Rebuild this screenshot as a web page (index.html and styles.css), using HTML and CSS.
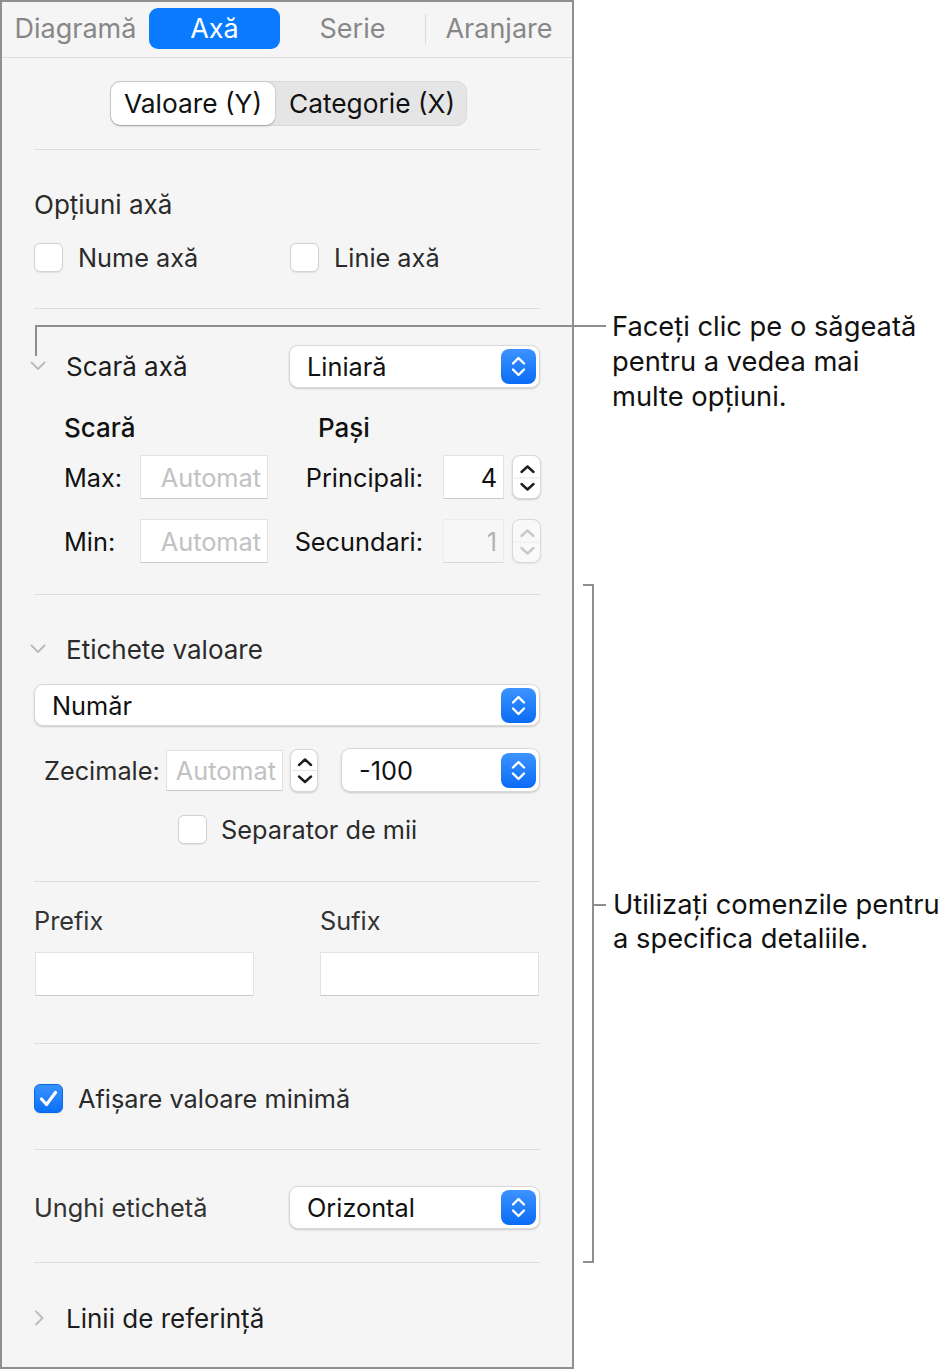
FILE: index.html
```html
<!DOCTYPE html>
<html lang="ro">
<head>
<meta charset="utf-8">
<title>Axă</title>
<link rel="stylesheet" href="styles.css">
</head>
<body>
<div class="page">
  <div class="panel">
    <div class="tabbar">
      <div class="tab t1">Diagramă</div>
      <div class="tab pill">Axă</div>
      <div class="tab t3">Serie</div>
      <div class="tabsep"></div>
      <div class="tab t4">Aranjare</div>
    </div>

    <div class="segwrap">
      <div class="seg">
        <div class="segitem on">Valoare (Y)</div>
        <div class="segitem">Categorie (X)</div>
      </div>
    </div>

    <div class="divider"></div>

    <div class="sec sec-a">
      <div class="title h40">Opțiuni axă</div>
      <div class="checks">
        <div class="chk w256"><span class="box"></span><span class="lbl">Nume axă</span></div>
        <div class="chk"><span class="box"></span><span class="lbl">Linie axă</span></div>
      </div>
    </div>

    <div class="divider"></div>

    <div class="sec sec-b">
      <div class="disc h44">
        <span class="chev"><svg width="16" height="10" viewBox="0 0 16 10"><path d="M1.5 1.5 L8 8 L14.5 1.5" stroke="#bcbcbc" stroke-width="2" fill="none" stroke-linecap="round" stroke-linejoin="round"/></svg></span>
        <span class="disc-t">Scară axă</span>
        <div class="popup w251">
          <span class="pv">Liniară</span>
          <span class="pbtn"><svg width="35" height="35" viewBox="0 0 35 35"><path d="M12 14.5 L17.5 9 L23 14.5 M12 20.5 L17.5 26 L23 20.5" stroke="#fff" stroke-width="2.4" fill="none" stroke-linecap="round" stroke-linejoin="round"/></svg></span>
        </div>
      </div>
      <div class="subhead">
        <span class="sh1">Scară</span>
        <span class="sh2">Pași</span>
      </div>
      <div class="numrow r-max">
        <span class="nl">Max:</span>
        <span class="field f128 ph">Automat</span>
        <span class="nl2">Principali:</span>
        <span class="field f61">4</span>
        <span class="stepper">
          <svg width="29" height="44" viewBox="0 0 29 44"><path d="M8.5 16 L14.5 10.5 L20.5 16 M8.5 28 L14.5 33.5 L20.5 28" stroke="#1e1e1e" stroke-width="2.4" fill="none" stroke-linecap="round" stroke-linejoin="round"/><path d="M1 22 H28" stroke="#e6e6e6" stroke-width="1"/></svg>
        </span>
      </div>
      <div class="numrow r-min">
        <span class="nl">Min:</span>
        <span class="field f128 ph">Automat</span>
        <span class="nl2">Secundari:</span>
        <span class="field f61 dis">1</span>
        <span class="stepper sdis">
          <svg width="29" height="44" viewBox="0 0 29 44"><path d="M8.5 16 L14.5 10.5 L20.5 16 M8.5 28 L14.5 33.5 L20.5 28" stroke="#c9c9c9" stroke-width="2.4" fill="none" stroke-linecap="round" stroke-linejoin="round"/><path d="M1 22 H28" stroke="#ececec" stroke-width="1"/></svg>
        </span>
      </div>
    </div>

    <div class="divider"></div>

    <div class="sec sec-c">
      <div class="disc h40">
        <span class="chev"><svg width="16" height="10" viewBox="0 0 16 10"><path d="M1.5 1.5 L8 8 L14.5 1.5" stroke="#bcbcbc" stroke-width="2" fill="none" stroke-linecap="round" stroke-linejoin="round"/></svg></span>
        <span class="disc-t dim">Etichete valoare</span>
      </div>
      <div class="popup wfull">
        <span class="pv">Număr</span>
        <span class="pbtn"><svg width="35" height="35" viewBox="0 0 35 35"><path d="M12 14.5 L17.5 9 L23 14.5 M12 20.5 L17.5 26 L23 20.5" stroke="#fff" stroke-width="2.4" fill="none" stroke-linecap="round" stroke-linejoin="round"/></svg></span>
      </div>
      <div class="decrow">
        <span class="dl">Zecimale:</span>
        <span class="field f117 ph">Automat</span>
        <span class="stepper st28">
          <svg width="28" height="43" viewBox="0 0 28 43"><path d="M8 16 L14 10.5 L20 16 M8 27.5 L14 33 L20 27.5" stroke="#1e1e1e" stroke-width="2.4" fill="none" stroke-linecap="round" stroke-linejoin="round"/><path d="M1 21.5 H27" stroke="#e6e6e6" stroke-width="1"/></svg>
        </span>
        <div class="popup w199">
          <span class="pv">-100</span>
          <span class="pbtn"><svg width="35" height="35" viewBox="0 0 35 35"><path d="M12 14.5 L17.5 9 L23 14.5 M12 20.5 L17.5 26 L23 20.5" stroke="#fff" stroke-width="2.4" fill="none" stroke-linecap="round" stroke-linejoin="round"/></svg></span>
        </div>
      </div>
      <div class="seprow">
        <span class="box"></span><span class="lbl">Separator de mii</span>
      </div>
    </div>

    <div class="divider"></div>

    <div class="sec sec-d">
      <div class="pfxlabels">
        <span class="pl">Prefix</span>
        <span>Sufix</span>
      </div>
      <div class="pfxfields">
        <span class="field f219 pf1"></span>
        <span class="field f219 pf2"></span>
      </div>
    </div>

    <div class="divider"></div>

    <div class="sec sec-e">
      <div class="chk">
        <span class="box checked"><svg width="29" height="29" viewBox="0 0 29 29"><path d="M7.5 15 L12.5 20.5 L21.5 8.5" stroke="#fff" stroke-width="3.2" fill="none" stroke-linecap="round" stroke-linejoin="round"/></svg></span>
        <span class="lbl">Afișare valoare minimă</span>
      </div>
    </div>

    <div class="divider"></div>

    <div class="sec sec-f">
      <div class="angrow">
        <span class="lbl">Unghi etichetă</span>
        <div class="popup w251">
          <span class="pv">Orizontal</span>
          <span class="pbtn"><svg width="35" height="35" viewBox="0 0 35 35"><path d="M12 14.5 L17.5 9 L23 14.5 M12 20.5 L17.5 26 L23 20.5" stroke="#fff" stroke-width="2.4" fill="none" stroke-linecap="round" stroke-linejoin="round"/></svg></span>
        </div>
      </div>
    </div>

    <div class="divider"></div>

    <div class="sec sec-g">
      <div class="disc h30">
        <span class="chev"><svg width="10" height="16" viewBox="0 0 10 16"><path d="M2 1.5 L8.5 8 L2 14.5" stroke="#bcbcbc" stroke-width="2" fill="none" stroke-linecap="round" stroke-linejoin="round"/></svg></span>
        <span class="disc-t">Linii de referință</span>
      </div>
    </div>
  </div>

  <div class="ln ln-h1"></div>
  <div class="ln ln-v1"></div>
  <div class="note note1">Faceți clic pe o săgeată<br>pentru a vedea mai<br>multe opțiuni.</div>

  <div class="ln br-v"></div>
  <div class="ln br-top"></div>
  <div class="ln br-bot"></div>
  <div class="ln br-mid"></div>
  <div class="note note2">Utilizați comenzile pentru<br>a specifica detaliile.</div>
</div>
</body>
</html>
```

FILE: styles.css
```css
* { box-sizing: border-box; }
body {
  margin: 0;
  background: #ffffff;
  font-family: Inter, "Liberation Sans", Arial, sans-serif;
  font-size: 25.3px;
  color: #1c1c1c;
}
.page {
  position: relative;
  width: 950px;
  height: 1370px;
}
.panel {
  width: 574px;
  height: 1369px;
  border: 2px solid #8f8f8f;
  background: #f5f5f5;
}

/* tab bar */
.tabbar {
  display: flex;
  align-items: flex-start;
  height: 56px;
  border-bottom: 1px solid #dcdcdc;
  padding-top: 6px;
}
.tab {
  height: 41px;
  display: flex;
  align-items: center;
  justify-content: center;
  color: #878787;
  font-size: 27px;
}
.t1 { width: 147px; }
.pill {
  width: 131px;
  background: #0a7bff;
  color: #ffffff;
  border-radius: 9px;
}
.t3 { width: 145px; }
.tabsep {
  width: 1px;
  height: 30px;
  margin-top: 6px;
  background: #dadada;
}
.t4 { width: 146px; }

/* segmented control */
.segwrap {
  padding-top: 23px;
  padding-left: 108px;
  height: 91px;
}
.seg {
  display: flex;
  width: 357px;
  height: 45px;
  background: #e5e5e5;
  border: 1px solid #dadada;
  border-radius: 10px;
  font-size: 26.3px;
}
.segitem {
  display: flex;
  align-items: center;
  justify-content: center;
  color: #111;
  width: 190px;
  padding-left: 4px;
}
.segitem.on {
  width: 164px;
  background: #ffffff;
  border-radius: 9px;
  box-shadow: 0 0.5px 2px rgba(0,0,0,0.3);
  padding-left: 0;
}

.divider {
  height: 1px;
  background: #dcdcdc;
  margin: 0 32px;
}

.sec { padding: 0 32px; }
.h40 { height: 40px; }
.h44 { height: 44px; }
.h30 { height: 30px; }
.title {
  display: flex;
  align-items: center;
  color: #2b2b2b;
  font-size: 26px;
}

/* checkboxes */
.box {
  display: inline-block;
  width: 29px;
  height: 29px;
  border-radius: 6px;
  background: #ffffff;
  border: 1px solid #d2d2d2;
  box-shadow: 0 0.5px 1px rgba(0,0,0,0.08);
  flex: none;
}
.box.checked {
  background: linear-gradient(#3a92ff, #0b6ff5);
  border-color: #0a6ae6;
}
.box.checked svg { display: block; margin: -1px; }
.chk {
  display: flex;
  align-items: center;
  height: 30px;
}
.chk .lbl { margin-left: 15px; color: #2b2b2b; }
.w256 { width: 256px; }

.sec-a { padding-top: 34px; height: 158px; }
.checks {
  display: flex;
  align-items: center;
  height: 40px;
  margin-top: 13px;
}

/* disclosure rows */
.disc {
  display: flex;
  align-items: center;
  margin-left: -12px;
}
.chev {
  width: 32px;
  display: flex;
  justify-content: center;
  align-items: center;
}
.h30 .chev { padding-left: 2px; }
.disc-t { margin-left: 12px; color: #1c1c1c; font-size: 26px; }
.disc-t.dim { color: #2b2b2b; }

/* popups */
.popup {
  display: flex;
  align-items: center;
  justify-content: space-between;
  height: 43px;
  background: #ffffff;
  border-radius: 9px;
  border: 0.5px solid #d8d8d8;
  box-shadow: 0 1px 2px rgba(0,0,0,0.18);
  padding-left: 17px;
  padding-right: 3px;
  color: #111;
  flex: none;
}
.disc .popup { margin-left: auto; }
.w251 { width: 251px; }
.w199 { width: 199px; }
.wfull { width: 506px; height: 42px; }
.pbtn {
  width: 35px;
  height: 35px;
  border-radius: 8px;
  background: linear-gradient(#3d93ff, #0a6cf5);
  display: block;
}
.pbtn svg { display: block; }

/* section B */
.sec-b { padding-top: 35px; height: 285px; }
.subhead {
  display: flex;
  align-items: center;
  height: 30px;
  margin-top: 24px;
  padding-left: 30px;
  font-weight: 500;
  font-size: 26px;
  color: #111;
}
.sh1 { width: 254px; }
.numrow {
  display: flex;
  align-items: center;
  height: 44px;
  padding-left: 30px;
}
.r-max { margin-top: 13px; }
.r-min { margin-top: 20px; }
.nl { width: 76px; color: #111; flex: none; }
.nl2 { width: 155px; text-align: right; margin-right: 20px; color: #111; flex: none; }

.field {
  display: flex;
  align-items: center;
  justify-content: flex-end;
  height: 44px;
  background: #ffffff;
  border: 1px solid #e3e3e3;
  border-bottom-color: #cbcbcb;
  padding-right: 6px;
  color: #111;
  flex: none;
}
.field.ph { color: #c2c2c2; }
.field.dis { background: #f7f7f7; color: #b3b3b3; border-color: #ececec; border-bottom-color: #d9d9d9; }
.f128 { width: 128px; }
.f61 { width: 61px; }
.f117 { width: 117px; height: 41px; }
.f219 { width: 219px; }

.stepper {
  display: block;
  width: 29px;
  height: 44px;
  margin-left: 8px;
  background: #ffffff;
  border-radius: 8px;
  border: 0.5px solid #d8d8d8;
  box-shadow: 0 1px 2px rgba(0,0,0,0.18);
  overflow: hidden;
  flex: none;
}
.stepper svg { display: block; margin: -0.5px; }
.stepper.sdis { background: #f9f9f9; box-shadow: 0 1px 2px rgba(0,0,0,0.08); }
.st28 { width: 28px; height: 43px; margin-left: 7px; }

/* section C */
.sec-c { padding-top: 34px; height: 286px; }
.sec-c .popup.wfull { margin-top: 15px; }
.decrow {
  display: flex;
  align-items: center;
  height: 44px;
  margin-top: 22px;
  padding-left: 10px;
}
.dl { color: #2b2b2b; width: 122px; flex: none; }
.decrow .popup { margin-left: 23px; height: 44px; }
.seprow {
  display: flex;
  align-items: center;
  height: 30px;
  margin-top: 22px;
  padding-left: 144px;
}
.seprow .lbl { margin-left: 14px; color: #2b2b2b; }

/* section D */
.sec-d { padding-top: 23px; height: 161px; }
.pfxlabels {
  display: flex;
  align-items: center;
  height: 30px;
  color: #333;
}
.pl { width: 286px; }
.pfxfields {
  display: flex;
  margin-top: 17px;
}
.pf1 { margin-left: 1px; }
.pf2 { margin-left: 66px; }

/* section E */
.sec-e { padding-top: 39px; height: 105px; }

/* section F */
.sec-f { padding-top: 36px; height: 112px; }
.angrow {
  display: flex;
  align-items: center;
  justify-content: space-between;
  height: 42px;
}
.angrow .lbl { color: #333; }
.angrow .popup { height: 43px; }

/* section G */
.sec-g { padding-top: 40px; }

/* callouts */
.ln {
  position: absolute;
  background: #8e8e8e;
}
.ln-h1 { left: 35px; top: 325px; width: 571px; height: 2px; }
.ln-v1 { left: 35px; top: 325px; width: 2px; height: 31px; }
.br-v { left: 592px; top: 584px; width: 2px; height: 679px; }
.br-top { left: 583px; top: 584px; width: 11px; height: 2px; }
.br-bot { left: 583px; top: 1261px; width: 11px; height: 2px; }
.br-mid { left: 592px; top: 904px; width: 14px; height: 2px; }
.note {
  position: absolute;
  font-size: 27.3px;
  color: #111;
  white-space: nowrap;
}
.note1 { left: 612px; top: 309px; line-height: 35px; }
.note2 { left: 613px; top: 888px; line-height: 34px; }
```
